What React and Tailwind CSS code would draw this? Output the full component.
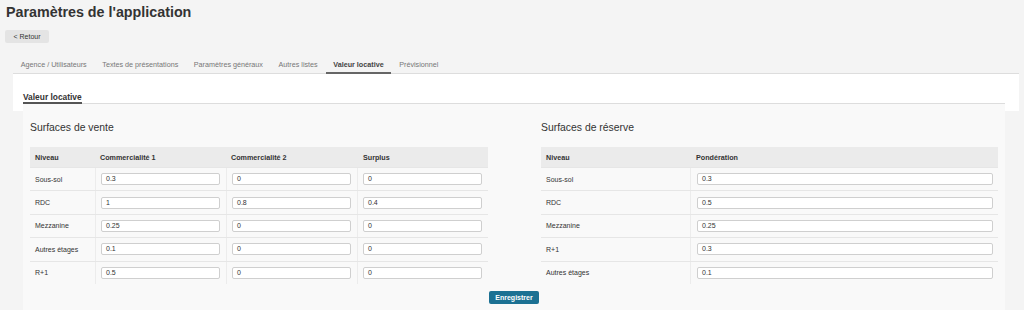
import React from "react";

const font = { fontFamily: '"Liberation Sans", Arial, sans-serif' };

const tabs = [
  "Agence / Utilisateurs",
  "Textes de présentations",
  "Paramètres généraux",
  "Autres listes",
  "Valeur locative",
  "Prévisionnel",
];

const vente = [
  ["Sous-sol", "0.3", "0", "0"],
  ["RDC", "1", "0.8", "0.4"],
  ["Mezzanine", "0.25", "0", "0"],
  ["Autres étages", "0.1", "0", "0"],
  ["R+1", "0.5", "0", "0"],
];

const reserve = [
  ["Sous-sol", "0.3"],
  ["RDC", "0.5"],
  ["Mezzanine", "0.25"],
  ["R+1", "0.3"],
  ["Autres étages", "0.1"],
];

function Input({ value }) {
  return (
    <div className="h-[12px] w-full rounded-[2px] border border-[#cfcfcf] bg-white pl-[4px] text-[7px] leading-[10px] text-[#333]">
      {value}
    </div>
  );
}

function VenteTable() {
  const cols = "grid grid-cols-[65px_131px_131px_131px]";
  return (
    <div className="w-[458px]">
      <div className={`${cols} h-[20px] items-center bg-[#ebebeb] text-[7.2px] font-bold leading-[9px] text-[#333]`}>
        <div className="pl-[5px]">Niveau</div>
        <div className="pl-[5px]">Commercialité 1</div>
        <div className="pl-[5px]">Commercialité 2</div>
        <div className="pl-[6px]">Surplus</div>
      </div>
      {vente.map((r, i) => (
        <div key={i} className={`${cols} h-[23.4px] border-t border-[#e6e6e6] text-[7px] leading-[9px] text-[#333]`}>
          <div className="flex items-center pl-[5px]">{r[0]}</div>
          {r.slice(1).map((v, j) => (
            <div key={j} className="flex items-center border-l border-[#ececec] pl-[5px] pr-[6px]">
              <Input value={v} />
            </div>
          ))}
        </div>
      ))}
    </div>
  );
}

function ReserveTable() {
  const cols = "grid grid-cols-[149px_308px]";
  return (
    <div className="w-[457px]">
      <div className={`${cols} h-[20px] items-center bg-[#ebebeb] text-[7.2px] font-bold leading-[9px] text-[#333]`}>
        <div className="pl-[5px]">Niveau</div>
        <div className="pl-[6px]">Pondération</div>
      </div>
      {reserve.map((r, i) => (
        <div key={i} className={`${cols} h-[23.4px] border-t border-[#e6e6e6] text-[7px] leading-[9px] text-[#333]`}>
          <div className="flex items-center pl-[5px]">{r[0]}</div>
          <div className="flex items-center border-l border-[#ececec] pl-[6px] pr-[5px]">
            <Input value={r[1]} />
          </div>
        </div>
      ))}
    </div>
  );
}

export default function App() {
  return (
    <div style={font} className="min-h-[310px] w-[1024px] overflow-hidden bg-[#f4f4f4] text-[#333]">
      <div className="px-[6px] pt-[4px] text-[14.3px] font-bold leading-[17px] text-[#333]">
        Paramètres de l'application
      </div>
      <div className="ml-[5px] mt-[9px] flex h-[13px] w-[44px] items-center justify-center rounded-[2px] bg-[#e4e4e4] text-[7px] leading-[9px] text-[#333]">
        &lt; Retour
      </div>
      <div className="ml-[13px] mr-[5px] mt-[11px] flex h-[20px] border-b border-[#dddddd]">
        {tabs.map((t) => {
          const active = t === "Valeur locative";
          return (
            <div
              key={t}
              className={
                "-mb-px flex h-[20px] items-center border-b-2 px-[7.8px] pt-[2px] text-[7.2px] leading-[9px] " +
                (active ? "border-[#666] font-bold text-[#444]" : "border-transparent text-[#777]")
              }
            >
              {t}
            </div>
          );
        })}
      </div>
      <div className="ml-[13px] mr-[5px] bg-white pb-[7px] pl-[10px] pr-[14px] pt-[18px]">
        <div className="border-b border-[#dddddd]">
          <div className="-mb-px w-fit border-b-2 border-[#555] text-[8.4px] font-bold leading-[10px] text-[#333]">
            Valeur locative
          </div>
        </div>
      </div>
      <div className="relative ml-[23px] -mt-[7px] w-[982px] bg-[#f9f9f9] px-[7px] pb-[10px] pt-[18px]">
        <div className="flex justify-between">
          <div>
            <div className="mb-[13px] text-[10.4px] leading-[12px] text-[#333]">Surfaces de vente</div>
            <VenteTable />
          </div>
          <div>
            <div className="mb-[13px] text-[10.4px] leading-[12px] text-[#333]">Surfaces de réserve</div>
            <ReserveTable />
          </div>
        </div>
        <div className="mt-[7px] flex justify-center">
          <div className="flex h-[13px] w-[50px] items-center justify-center rounded-[2px] bg-[#1c7193] text-[7px] font-bold leading-[9px] text-white">
            Enregistrer
          </div>
        </div>
      </div>
    </div>
  );
}
